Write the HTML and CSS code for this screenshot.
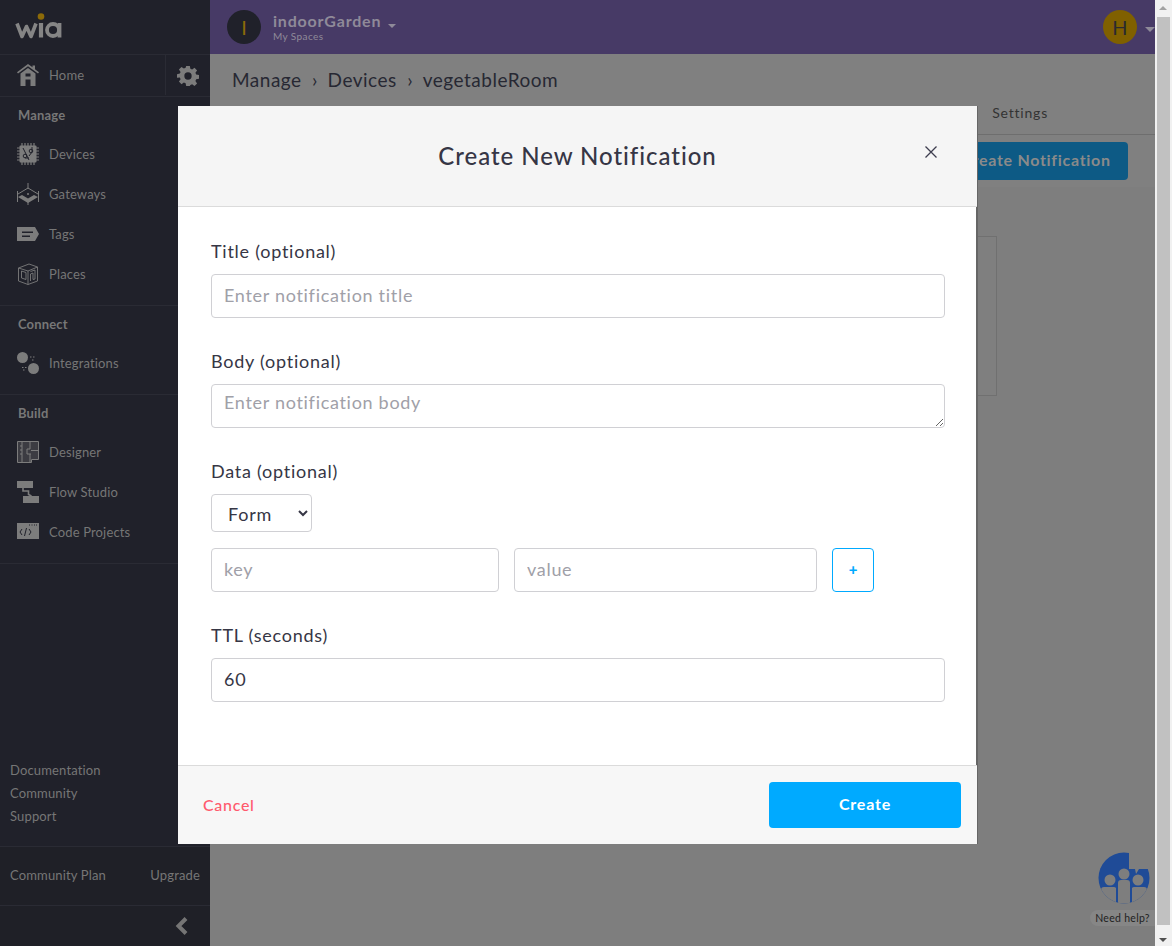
FILE: index.html
```html
<!DOCTYPE html>
<html lang="en">
<head>
  <meta charset="UTF-8" />
  <title>Create New Notification</title>
  <link rel="stylesheet" href="styles.css">
</head>
<body>
  <div class="app">
    <aside class="sidebar">
      <div class="logo">
        <svg width="50" height="30" viewBox="0 0 50 30">
          <path d="M2 10.500L7 23.500L11.500 13.500L16 23.500L21 10.500" fill="none" stroke="#858585" stroke-width="3.600" stroke-linejoin="round"/>
          <path d="M26 10V24.500" stroke="#858585" stroke-width="4.200"/>
          <circle cx="26" cy="3.500" r="3.300" fill="#8c6a08"/>
          <circle cx="38" cy="17" r="6" fill="none" stroke="#858585" stroke-width="3.800"/>
          <path d="M44.500 10V24.500" stroke="#858585" stroke-width="3.800"/>
        </svg>
      </div>
      <div class="home-row">
        <a class="nav-item home-link">
          <svg class="nav-icon" viewBox="0 0 22 22"><path fill="#7c7c7c" d="M11 0L15.500 3.300V1.500H18V5.200L22 8.200L21 9.400L11 2.200L1 9.400L0 8.200Z"/><path fill="#7c7c7c" fill-rule="evenodd" d="M3.500 9.500L11 4L18.500 9.500V22H13.500V15.500H8.500V22H3.500ZM8.500 9.500V12.500H13.500V9.500Z"/></svg>
          <span>Home</span>
        </a>
        <div class="gear">
          <svg width="22" height="22" viewBox="0 0 24 24"><path fill="#7c7c7c" fill-rule="evenodd" d="M10 1h4l.6 3.100 1.900.8 2.600-1.800 2.800 2.800-1.800 2.600.8 1.900 3.100.6v4l-3.100.6-.8 1.900 1.800 2.600-2.800 2.800-2.600-1.800-1.900.8L14 23h-4l-.6-3.100-1.900-.8-2.600 1.800-2.800-2.800 1.800-2.600-.8-1.900L0 14v-4l3.100-.6.800-1.900L2.100 4.900l2.800-2.800 2.600 1.800 1.900-.8zM12 8a4 4 0 1 0 0 8a4 4 0 0 0 0-8z"/></svg>
        </div>
      </div>

      <section class="nav-group group-manage">
        <h4>Manage</h4>
        <a class="nav-item">
          <svg class="nav-icon" viewBox="0 0 22 22"><path stroke="#7c7c7c" stroke-width="1.200" d="M5 0v22M8 0v22M11 0v22M14 0v22M17 0v22M0 5h22M0 8h22M0 11h22M0 14h22M0 17h22"/><rect x="2.500" y="2.500" width="17" height="17" rx="1" fill="#7c7c7c"/><path d="M6 5l6 12M15 4v5l-3 4M8 15h4" fill="none" stroke="#20212a" stroke-width="1"/><circle cx="14" cy="8" r="1.800" fill="none" stroke="#20212a"/><circle cx="8" cy="13" r="1.800" fill="none" stroke="#20212a"/></svg>
          <span>Devices</span>
        </a>
        <a class="nav-item">
          <svg class="nav-icon" viewBox="0 0 22 22"><path d="M11 0v6M.5 8v11M21.500 8v11M11 19v3M1 11L11 5L21 11" fill="none" stroke="#7c7c7c"/><path fill="#7c7c7c" d="M1 14L5 12L11 15.500L17 12L21 14L11 20Z"/><circle cx="11" cy="11" r="1" fill="#7c7c7c"/></svg>
          <span>Gateways</span>
        </a>
        <a class="nav-item">
          <svg class="nav-icon" viewBox="0 0 22 22"><path fill="#7c7c7c" fill-rule="evenodd" d="M0 4H18L22 11L18 18H0ZM5 8.500V10H16V8.500ZM5 12.500V14H13V12.500Z"/></svg>
          <span>Tags</span>
        </a>
        <a class="nav-item">
          <svg class="nav-icon" viewBox="0 0 22 22"><path d="M1.500 5L12 1L20.500 4V18L11 21.500L1.500 18ZM1.500 5L11 8V21.500M11 8L20.500 4M4.500 8V15L9 16.500V9.500ZM13.500 8.500L18 7V16L16 16.500V10L13.500 11V18" fill="none" stroke="#7c7c7c" stroke-width=".9"/></svg>
          <span>Places</span>
        </a>
      </section>

      <section class="nav-group group-connect">
        <h4>Connect</h4>
        <a class="nav-item">
          <svg class="nav-icon" viewBox="0 0 22 22"><circle cx="5.500" cy="5.500" r="5.500" fill="#7c7c7c"/><circle cx="16.500" cy="16.500" r="5.500" fill="#7c7c7c"/><path d="M13 5h1.500M16 5h1.500M15 8h1.500M5 15.500h1.500M8 15.500h1.500M6 18h1.500" stroke="#7c7c7c" stroke-width="1.200"/></svg>
          <span>Integrations</span>
        </a>
      </section>

      <section class="nav-group group-build">
        <h4>Build</h4>
        <a class="nav-item">
          <svg class="nav-icon" viewBox="0 0 22 22"><path fill="#3c3c42" d="M1 1H21V18H14V21H1Z"/><path d="M.5 .5H21.500V18.500H14.500V21.500H.5ZM5 1v20M3 5h2M3 9h2M3 13h2M13 1v7h-3v5h4M14 9.500h7M13 13v8" fill="none" stroke="#7c7c7c"/></svg>
          <span>Designer</span>
        </a>
        <a class="nav-item">
          <svg class="nav-icon" viewBox="0 0 22 22"><rect x="0" y="0" width="16" height="7" fill="#7c7c7c"/><rect x="6" y="15" width="16" height="7" fill="#7c7c7c"/><path d="M6 6v4h5.500v3.500l3 1.500" fill="none" stroke="#7c7c7c" stroke-width="1.600"/></svg>
          <span>Flow Studio</span>
        </a>
        <a class="nav-item">
          <svg class="nav-icon" viewBox="0 0 22 22"><rect x="0" y="2" width="22" height="16" fill="#7c7c7c"/><path d="M5 8L3 11L5 14M9.500 7L7.500 15M12 8L14 11L12 14" fill="none" stroke="#20212a" stroke-width="1"/><path d="M12 4h1M14.500 4h1M17 4h1M19 4h1" stroke="#20212a"/></svg>
          <span>Code Projects</span>
        </a>
      </section>

      <div class="side-links">
        <a>Documentation</a>
        <a>Community</a>
        <a>Support</a>
      </div>
      <div class="plan">
        <span>Community Plan</span>
        <span>Upgrade</span>
      </div>
      <div class="collapse">
        <svg width="14" height="18" viewBox="0 0 14 18"><path d="M11 1.500L3.500 9L11 16.500" fill="none" stroke="#757575" stroke-width="4"/></svg>
      </div>
    </aside>

    <div class="main">
      <header class="topbar">
        <div class="avatar space-avatar">I</div>
        <div class="space-name">
          <div class="space-title">indoorGarden <i class="caret"></i></div>
          <div class="space-sub">My Spaces</div>
        </div>
        <div class="avatar user-avatar">H</div>
        <i class="caret user-caret"></i>
      </header>
      <div class="page">
        <div class="crumbs">
          <span>Manage</span><b>&rsaquo;</b><span>Devices</span><b>&rsaquo;</b><span>vegetableRoom</span>
        </div>
        <div class="tabs"><span>Settings</span></div>
        <div class="actions"><button class="ghost-btn">Create Notification</button></div>
        <div class="card"></div>
        <div class="help">
          <svg width="54" height="52" viewBox="0 0 54 52">
            <defs><clipPath id="help-disc"><circle cx="26" cy="26" r="25.500"/></clipPath></defs>
            <circle cx="26" cy="26" r="25.500" fill="#1f4b97"/>
            <path fill="#7e7e7e" d="M31 0H52a2 2 0 0 1 2 2V15a2 2 0 0 1-2 2H41L38 22L37 17H31Z"/>
            <circle cx="26" cy="22" r="5.500" fill="#7e7e7e"/>
            <circle cx="12" cy="28" r="5.500" fill="#7e7e7e"/>
            <circle cx="40" cy="28" r="5.500" fill="#7e7e7e"/>
            <g clip-path="url(#help-disc)" fill="#7e7e7e">
              <path d="M20 31a3 3 0 0 1 3-3h6a3 3 0 0 1 3 3V52H20Z"/>
              <path d="M3 38a3 3 0 0 1 3-3h10a3 3 0 0 1 2 1V52H3Z"/>
              <path d="M34 36a3 3 0 0 1 2-1h10a3 3 0 0 1 3 3V52H34Z"/>
            </g>
          </svg>
          <div class="help-label">Need help?</div>
        </div>
      </div>
    </div>

    <div class="scrollbar">
      <i class="arrow-up"></i>
      <div class="thumb"></div>
      <i class="arrow-down"></i>
    </div>
  </div>

  <div class="modal">
    <div class="modal-head">
      <h2>Create New Notification</h2>
      <svg class="close" width="12" height="12" viewBox="0 0 12 12"><path d="M.5 .5L11.500 11.500M11.500 .5L.5 11.500" stroke="#3d3d4e" stroke-width="1.300"/></svg>
    </div>
    <form class="modal-body">
      <label>Title (optional)</label>
      <input class="field" placeholder="Enter notification title">
      <label>Body (optional)</label>
      <textarea class="field area" placeholder="Enter notification body"></textarea>
      <label>Data (optional)</label>
      <select class="kind"><option>Form</option></select>
      <div class="pair">
        <input class="field key" placeholder="key">
        <input class="field value" placeholder="value">
        <button type="button" class="add">+</button>
      </div>
      <label>TTL (seconds)</label>
      <input class="field" value="60">
    </form>
    <div class="modal-foot">
      <a class="cancel">Cancel</a>
      <button class="create">Create</button>
    </div>
  </div>
</body>
</html>
```

FILE: styles.css
```css
* {
  box-sizing: border-box;
}
body {
  margin: 0;
  height: 946px;
  overflow: hidden;
  font-family: Lato, sans-serif;
  background: #7e7e7e;
  color: #272833;
}
.app {
  display: flex;
  height: 946px;
}

/* sidebar */
.sidebar {
  width: 210px;
  flex: none;
  display: flex;
  flex-direction: column;
  background: #20212a;
  color: #767676;
  font-size: 13px;
  letter-spacing: .15px;
}
.logo {
  height: 54px;
  padding: 13px 0 0 15px;
}
.home-row {
  height: 43px;
  display: flex;
  border-top: 1px solid #2a2b34;
  border-bottom: 1px solid #2a2b34;
}
.home-link {
  flex: 1;
  height: 41px;
  border-right: 1px solid #2a2b34;
}
.gear {
  width: 44px;
  display: flex;
  align-items: center;
  justify-content: center;
}
.nav-item {
  display: flex;
  align-items: center;
  gap: 10px;
  height: 40px;
  padding-left: 17px;
}
.nav-icon {
  width: 22px;
  height: 22px;
  flex: none;
}
.nav-group {
  border-bottom: 1px solid #2a2b34;
}
.nav-group h4 {
  margin: 0 0 9px;
  padding-left: 18px;
  height: 18px;
  line-height: 17px;
  font-size: 13px;
  font-weight: 700;
  color: #777;
}
.group-manage {
  padding-top: 10px;
  height: 209px;
}
.group-connect {
  padding-top: 10px;
  height: 89px;
}
.group-build {
  padding-top: 10px;
  height: 169px;
}
.side-links {
  margin-top: auto;
  padding: 0 10px 21px;
  display: flex;
  flex-direction: column;
  gap: 5px;
}
.side-links a {
  height: 18px;
  line-height: 18px;
}
.plan {
  height: 60px;
  padding: 0 10px 2px;
  display: flex;
  align-items: center;
  justify-content: space-between;
  background: #1f2027;
  border-top: 1px solid #2a2b34;
  border-bottom: 1px solid #2a2b34;
}
.collapse {
  height: 40px;
  padding-right: 21px;
  display: flex;
  align-items: center;
  justify-content: flex-end;
  background: #1f2027;
}

/* page behind the dialog */
.main {
  flex: 1;
  min-width: 0;
  display: flex;
  flex-direction: column;
}
.topbar {
  height: 54px;
  flex: none;
  display: flex;
  align-items: center;
  padding-left: 17px;
  background: #473a66;
}
.avatar {
  width: 34px;
  height: 34px;
  border-radius: 50%;
  display: flex;
  align-items: center;
  justify-content: center;
  font-size: 20px;
}
.space-avatar {
  background: #20212a;
  color: #8c6a08;
}
.space-name {
  margin-left: 12px;
  flex: 1;
  color: #8f8a99;
}
.space-title {
  font-size: 16px;
  font-weight: 700;
  line-height: 17px;
  letter-spacing: .8px;
}
.space-sub {
  font-size: 10px;
  line-height: 12px;
  letter-spacing: .4px;
  margin-top: 1px;
}
.caret {
  display: inline-block;
  margin: 6px 0 0 2px;
  border: 4px solid transparent;
  border-top-color: #8f8a99;
  border-bottom: 0;
  vertical-align: middle;
}
.user-avatar {
  background: #806000;
  color: #2a2a30;
}
.user-caret {
  margin: 4px 0 0 8px;
  border-width: 5px;
  border-bottom: 0;
}
.page {
  flex: 1;
  position: relative;
  background: #7e7e7e;
}
.crumbs {
  height: 52px;
  padding: 0 0 2px 22px;
  display: flex;
  align-items: center;
  gap: 10.500px;
  font-size: 19px;
  letter-spacing: .5px;
  background: #808080;
  color: #272833;
}
.crumbs b {
  width: 5px;
  font-weight: 400;
}
.tabs {
  height: 29px;
  display: flex;
  justify-content: flex-end;
  padding: 0 107px 0 0;
  align-items: flex-start;
  font-size: 14px;
  line-height: 14px;
  letter-spacing: .8px;
  color: #333;
  border-bottom: 1px solid #6e6e6e;
  background: #808080;
}
.actions {
  height: 52px;
  padding: 7px 27px 0 0;
  text-align: right;
  background: #808080;
}
.ghost-btn {
  height: 38px;
  width: 184px;
  padding: 0 0 3px;
  border: 0;
  border-radius: 4px;
  background: #0d5a85;
  color: #8a8a8a;
  font: 700 16px Lato, sans-serif;
  letter-spacing: .7px;
}
.card {
  width: 760px;
  height: 160px;
  margin: 49px 0 0 27px;
  border: 1px solid #707070;
  background: #7f7f7f;
}
.help {
  position: absolute;
  right: 0;
  bottom: 20px;
  width: 65px;
  display: flex;
  flex-direction: column;
  align-items: flex-end;
  gap: 6px;
}
.help svg {
  margin-right: 3px;
}
.help-label {
  width: 65px;
  height: 16px;
  border-radius: 8px 0 0 8px;
  background: #868686;
  font-size: 10.500px;
  letter-spacing: .3px;
  line-height: 17px;
  text-align: center;
  color: #222;
}
.scrollbar {
  width: 17px;
  flex: none;
  position: relative;
  background: #f1f1f1;
  padding: 17px 2px;
}
.thumb {
  height: 908px;
  background: #c1c1c1;
}
.arrow-up,
.arrow-down {
  position: absolute;
  left: 4px;
  border: 4px solid transparent;
}
.arrow-up {
  top: 2px;
  border-bottom: 4px solid #a3a3a3;
}
.arrow-down {
  bottom: 0;
  border-top: 4px solid #505050;
}

/* dialog */
.modal {
  position: absolute;
  left: 178px;
  top: 106px;
  width: 800px;
  height: 738px;
  display: flex;
  flex-direction: column;
  background: #fff;
  border-right: 1px solid #666;
}
.modal-head {
  height: 101px;
  flex: none;
  position: relative;
  display: flex;
  align-items: center;
  justify-content: center;
  padding: 0 0 2px;
  background: #f5f5f5;
  border-bottom: 1px solid #dbdbdb;
}
.modal-head h2 {
  margin: 0;
  font-size: 24px;
  font-weight: 500;
  letter-spacing: .95px;
  color: #363645;
}
.close {
  position: absolute;
  right: 40px;
  top: 40px;
}
.modal-body {
  flex: 1;
  padding: 32px 31px 0 33px;
  display: flex;
  flex-direction: column;
  align-items: flex-start;
  border-right: 1px solid #666;
}
.modal-body label {
  height: 26px;
  line-height: 24px;
  font-size: 18px;
  letter-spacing: .75px;
  color: #363645;
  margin-bottom: 9px;
}
.field {
  display: block;
  width: 734px;
  height: 44px;
  margin-bottom: 31px;
  padding: 0 12px 2px;
  border: 1px solid #d0d0d4;
  border-radius: 4px;
  background: #fff;
  font: 18px Lato, sans-serif;
  letter-spacing: .7px;
  color: #363645;
  outline: 0;
}
.field::placeholder {
  color: #a0a0a8;
}
.area {
  padding-top: 6px;
  resize: vertical;
}
.kind {
  width: 101px;
  height: 38px;
  margin-bottom: 16px;
  padding: 2px 0 0 12px;
  border: 1px solid #d0d0d4;
  border-radius: 4px;
  background: #fff;
  font: 18px Lato, sans-serif;
  letter-spacing: .8px;
  color: #363645;
}
.pair {
  display: flex;
  gap: 15px;
  margin-bottom: 31px;
}
.pair .field {
  margin: 0;
}
.key {
  width: 288px;
}
.pair .value {
  width: 303px;
}
.add {
  width: 42px;
  height: 44px;
  padding: 0 0 3px;
  border: 1px solid #00aaff;
  border-radius: 4px;
  background: #fff;
  color: #00aaff;
  font: 900 15px Lato, sans-serif;
}
.modal-foot {
  height: 79px;
  flex: none;
  display: flex;
  align-items: center;
  justify-content: space-between;
  padding: 0 16px 0 25px;
  background: #f7f7f7;
  border-top: 1px solid #dbdbdb;
}
.cancel {
  margin-bottom: 2px;
  font-size: 16px;
  font-weight: 500;
  letter-spacing: .7px;
  color: #ff5a6e;
}
.create {
  width: 192px;
  height: 46px;
  padding: 0 0 3px;
  border: 0;
  border-radius: 4px;
  background: #00aaff;
  color: #fff;
  font: 700 16px Lato, sans-serif;
  letter-spacing: .8px;
}
```
